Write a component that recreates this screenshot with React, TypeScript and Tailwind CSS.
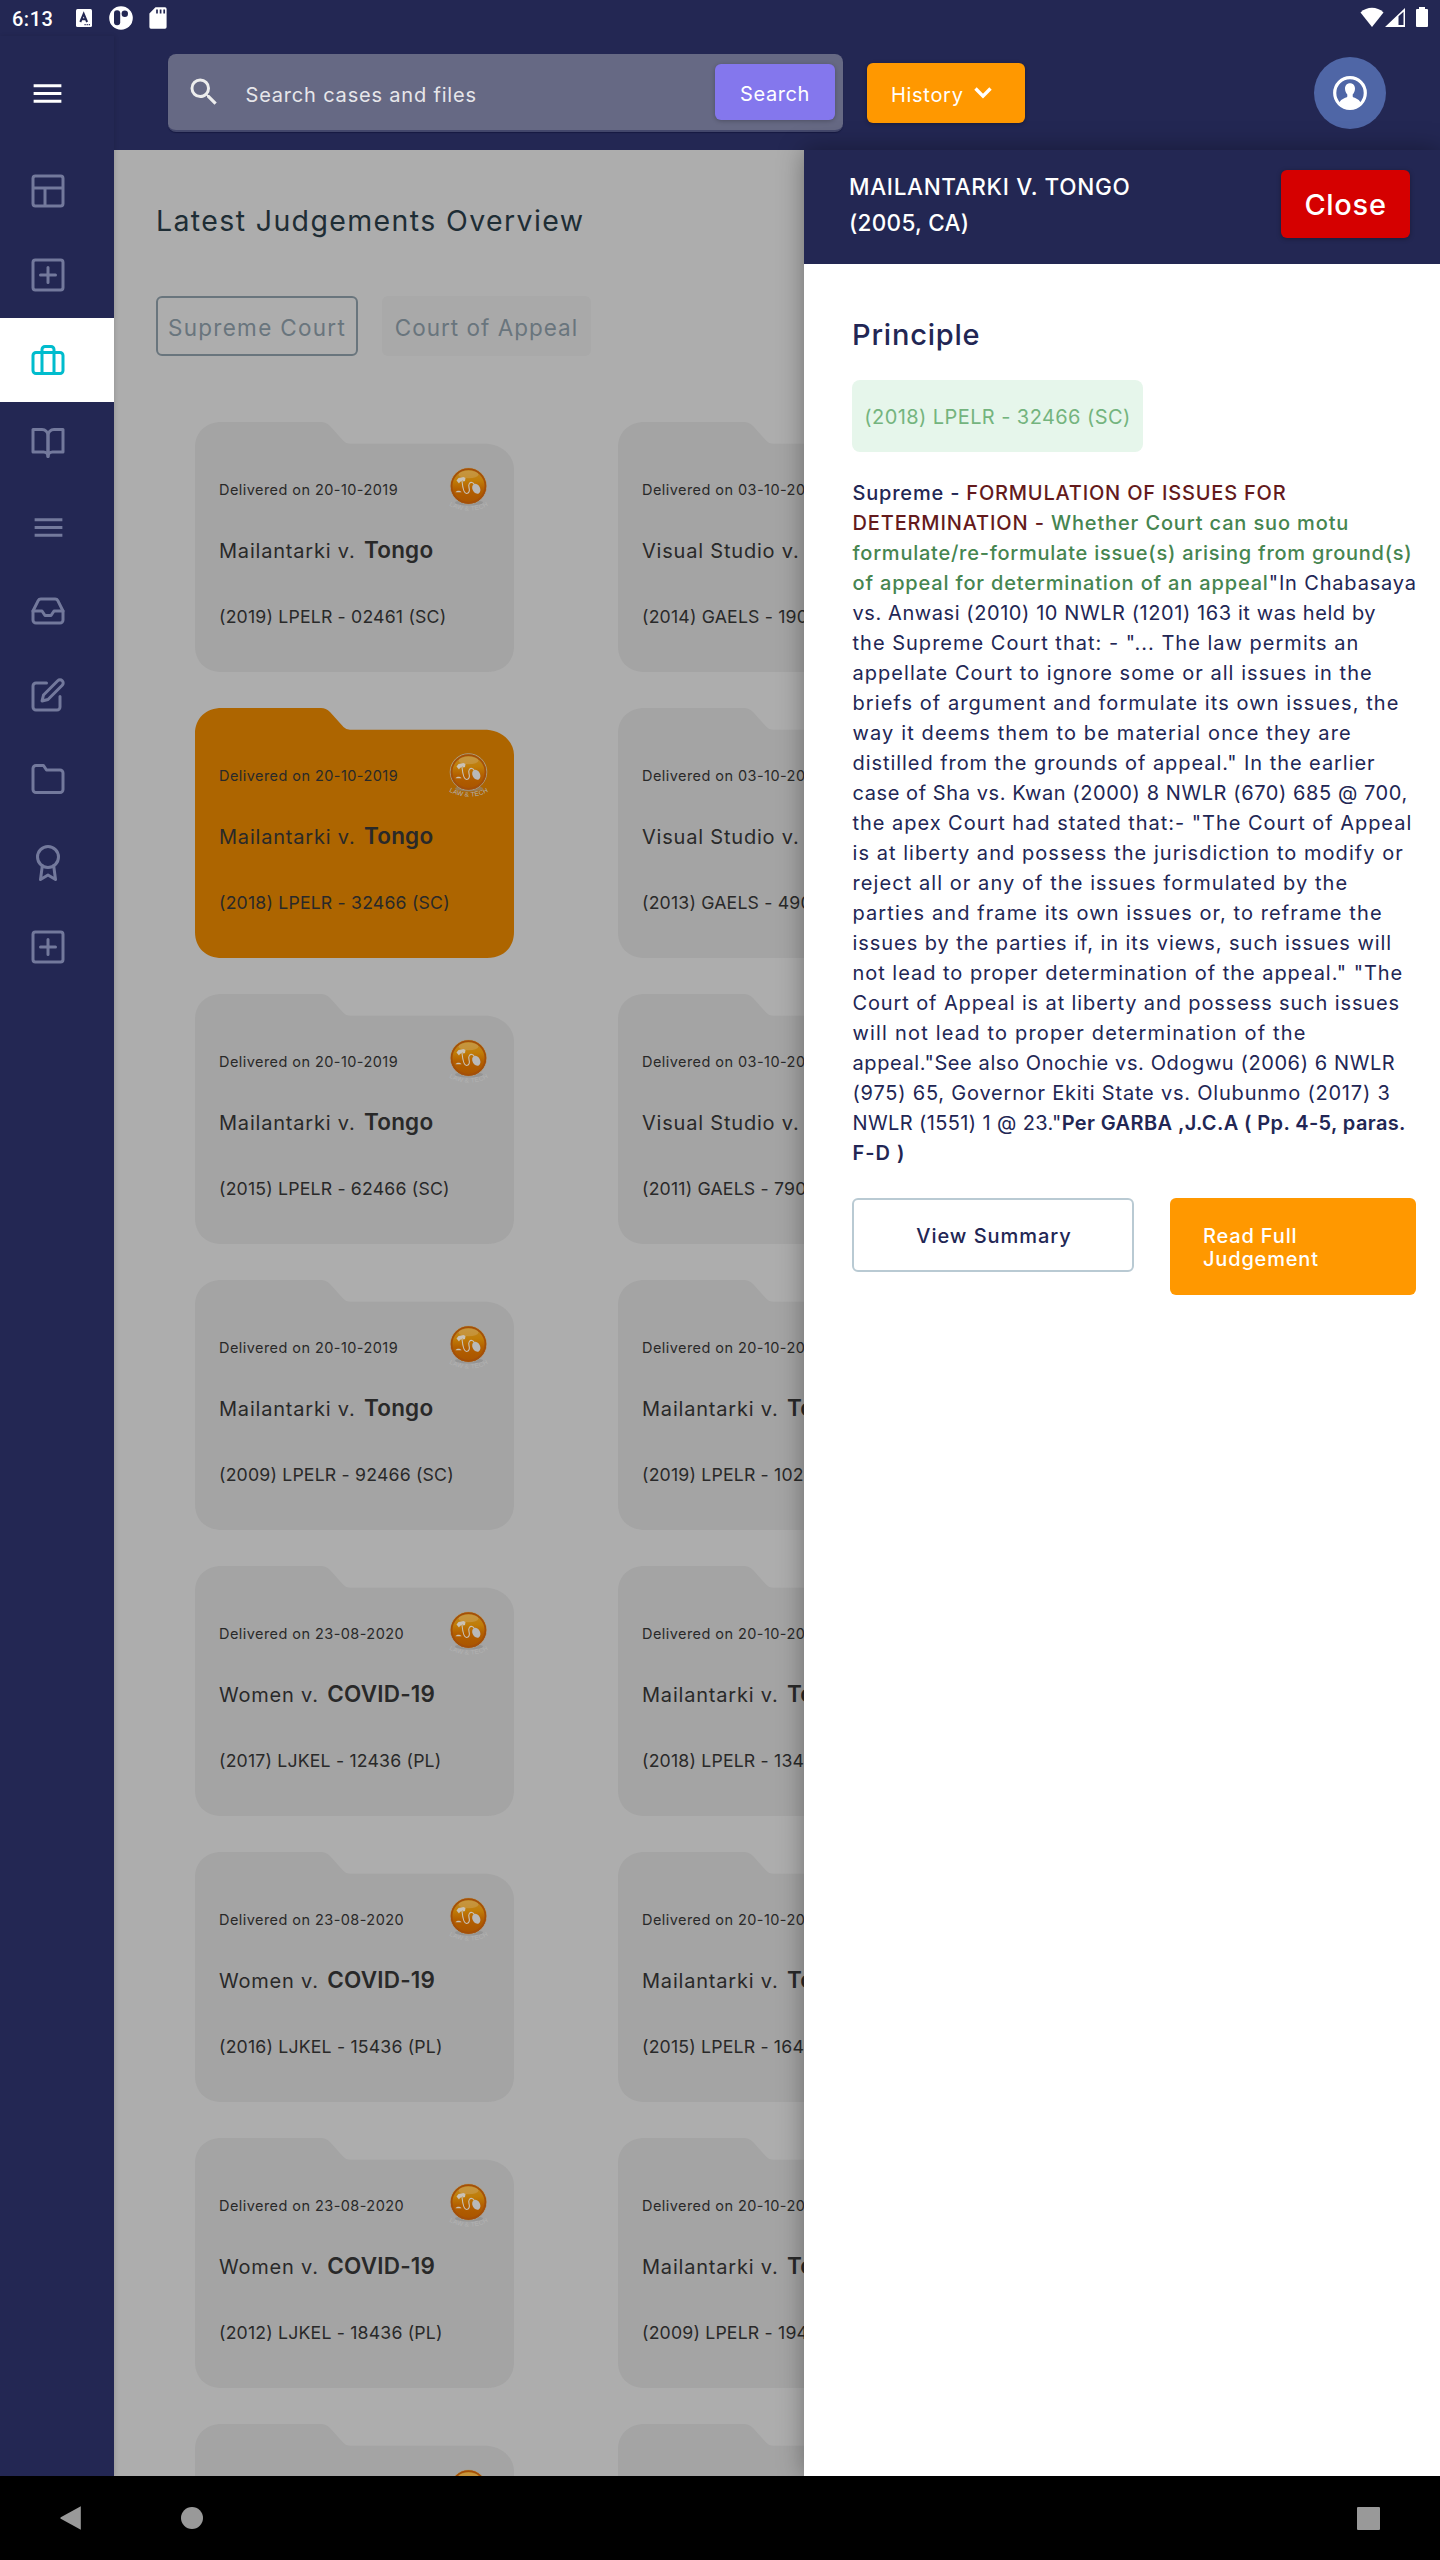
import type { ReactNode } from 'react';
import { FiAward, FiBookOpen, FiBriefcase, FiEdit, FiFolder, FiInbox } from 'react-icons/fi';
import { MdMenu, MdSearch } from 'react-icons/md';

type Case = { date: string; party: string; rival: string; cite: string; active?: boolean };

const cases: Case[] = [
  { date: '20-10-2019', party: 'Mailantarki v.', rival: 'Tongo', cite: '(2019) LPELR - 02461 (SC)' },
  { date: '03-10-2019', party: 'Visual Studio v.', rival: 'Code', cite: '(2014) GAELS - 19061 (SC)' },
  { date: '20-10-2019', party: 'Mailantarki v.', rival: 'Tongo', cite: '(2018) LPELR - 32466 (SC)', active: true },
  { date: '03-10-2019', party: 'Visual Studio v.', rival: 'Code', cite: '(2013) GAELS - 49061 (SC)' },
  { date: '20-10-2019', party: 'Mailantarki v.', rival: 'Tongo', cite: '(2015) LPELR - 62466 (SC)' },
  { date: '03-10-2019', party: 'Visual Studio v.', rival: 'Code', cite: '(2011) GAELS - 79061 (SC)' },
  { date: '20-10-2019', party: 'Mailantarki v.', rival: 'Tongo', cite: '(2009) LPELR - 92466 (SC)' },
  { date: '20-10-2019', party: 'Mailantarki v.', rival: 'Tongo', cite: '(2019) LPELR - 10246 (SC)' },
  { date: '23-08-2020', party: 'Women v.', rival: 'COVID-19', cite: '(2017) LJKEL - 12436 (PL)' },
  { date: '20-10-2019', party: 'Mailantarki v.', rival: 'Tongo', cite: '(2018) LPELR - 13466 (SC)' },
  { date: '23-08-2020', party: 'Women v.', rival: 'COVID-19', cite: '(2016) LJKEL - 15436 (PL)' },
  { date: '20-10-2019', party: 'Mailantarki v.', rival: 'Tongo', cite: '(2015) LPELR - 16466 (SC)' },
  { date: '23-08-2020', party: 'Women v.', rival: 'COVID-19', cite: '(2012) LJKEL - 18436 (PL)' },
  { date: '20-10-2019', party: 'Mailantarki v.', rival: 'Tongo', cite: '(2009) LPELR - 19466 (SC)' },
  { date: '23-08-2020', party: 'Women v.', rival: 'COVID-19', cite: '(2010) LJKEL - 21436 (PL)' },
  { date: '20-10-2019', party: 'Mailantarki v.', rival: 'Tongo', cite: '(2008) LPELR - 22466 (SC)' },
];

function StatusBar() {
  return (
    <div className="flex h-9 shrink-0 items-start justify-between bg-[#232753] text-white">
      <div className="flex items-start">
        <span className="ml-3 w-[64px] pt-[7px] font-['Roboto'] text-[20px] leading-6 font-medium tracking-[0.5px]">6:13</span>
        <svg className="mt-[9px]" width="16" height="18" viewBox="0 0 16 18">
          <rect width="16" height="18" rx="1.5" fill="#fff" />
          <path d="M4.3 13 7.7 4.8 11.1 13M5.4 10.3h4.6" fill="none" stroke="#232753" strokeWidth="2" />
          <path d="M8.5 15.7h5.5" stroke="#232753" strokeWidth="1.2" strokeDasharray="1.2 .9" />
        </svg>
        <svg className="mt-[6px] ml-[17px]" width="24" height="24" viewBox="0 0 24 24">
          <circle cx="12" cy="12" r="11.8" fill="#fff" />
          <rect x="5" y="4.3" width="6.2" height="15" rx="3" fill="#232753" />
          <circle cx="15.8" cy="7.8" r="3.2" fill="#232753" />
        </svg>
        <svg className="mt-[7px] ml-4" width="18" height="22" viewBox="0 0 18 22">
          <path d="M6.5.3H16A1.7 1.7 0 0 1 17.6 2v18a1.7 1.7 0 0 1-1.6 1.7H2A1.7 1.7 0 0 1 .4 20V6.500Z" fill="#fff" />
          <path d="M8 2.500v4M11.600 2.500v4M15.200 2.500v4" stroke="#232753" strokeWidth="1.700" />
        </svg>
      </div>
      <div className="mt-[7px] mr-3 flex">
        <svg width="24" height="20" viewBox="0 0 24 20">
          <path d="M.5 5.500C7-.7 17-.7 23.500 5.500L12 20Z" fill="#fff" />
        </svg>
        <svg className="ml-[1px]" width="20" height="20" viewBox="0 0 20 20">
          <path fillRule="evenodd" d="M0 20 20 1v19ZM13.500 9.200V18h5V4.800Z" fill="#fff" />
        </svg>
        <svg className="ml-[11px]" width="12" height="20" viewBox="0 0 12 20">
          <path d="M3 0h6v2h2a1 1 0 0 1 1 1v16a1 1 0 0 1-1 1H1a1 1 0 0 1-1-1V3a1 1 0 0 1 1-1h2Z" fill="#fff" />
        </svg>
      </div>
    </div>
  );
}

function PlusSquare() {
  return (
    <svg width="36" height="36" viewBox="0 0 24 24" fill="none" stroke="currentColor" strokeWidth="2" strokeLinecap="round">
      <rect x="2" y="2" width="20" height="20" rx="1.600" />
      <path d="M12 7v10M7 12h10" />
    </svg>
  );
}

function LayoutIcon() {
  return (
    <svg width="36" height="36" viewBox="0 0 24 24" fill="none" stroke="currentColor" strokeWidth="2">
      <rect x="2" y="2" width="20" height="20" rx="1.600" />
      <path d="M2 10h20M10 10v12" />
    </svg>
  );
}

function SideItem({ children, active }: { children: ReactNode; active?: boolean }) {
  return (
    <div className={active ? 'flex h-[84px] items-center bg-white pb-[1px] pl-[29.500px] text-[#00bccd]' : 'flex h-[84px] items-center pb-[2px] pl-[29.500px] text-[#73799c]'}>
      {children}
    </div>
  );
}

function Sidebar() {
  return (
    <aside className="z-10 w-[114px] shrink-0 bg-[#232753] shadow-[1px_0_4px_rgba(0,0,0,0.12)]">
      <div className="flex h-[114px] items-center pl-[29px] text-white">
        <MdMenu size={37} />
      </div>
      <SideItem><LayoutIcon /></SideItem>
      <SideItem><PlusSquare /></SideItem>
      <SideItem active><FiBriefcase size={36} /></SideItem>
      <SideItem><FiBookOpen size={36} /></SideItem>
      <SideItem><MdMenu size={37} /></SideItem>
      <SideItem><FiInbox size={36} /></SideItem>
      <SideItem><FiEdit size={36} /></SideItem>
      <SideItem><FiFolder size={36} /></SideItem>
      <SideItem><FiAward size={36} /></SideItem>
      <SideItem><PlusSquare /></SideItem>
    </aside>
  );
}

function Header() {
  return (
    <header className="flex h-[114px] shrink-0 bg-[#232753] pl-[54px] text-[20px] text-white">
      <div className="mt-[18px] flex h-[78px] w-[675px] items-center rounded-[8px] border-b-2 border-[#43476b] bg-[#666984] shadow-[0_1px_1px_rgba(10,12,50,0.5)]">
        <MdSearch size={36} className="ml-[18px] text-[#ededed]" />
        <span className="ml-[23.500px] flex-1 pt-[5px] tracking-[0.810px] text-[#e6e6ea]">Search cases and files</span>
        <button className="mr-2 flex h-14 w-[120px] items-center justify-center rounded-[6px] bg-[#8477ed] pt-[4px] tracking-[0.600px] shadow-[0_1px_4px_rgba(0,0,0,0.25)]">
          Search
        </button>
      </div>
      <button className="mt-[27px] ml-6 flex h-[60px] w-[158px] items-center rounded-[6px] bg-[#ff9800] pl-6 tracking-[0.700px] shadow-[0_1px_4px_rgba(0,0,0,0.3)]">
        <span className="pt-[4px]">History</span>
        <svg className="ml-[10px]" width="18" height="12" viewBox="0 0 18 12">
          <path d="m1.500 1.500 7.500 7.600 7.500-7.600" fill="none" stroke="#fff" strokeWidth="3.400" />
        </svg>
      </button>
      <div className="mt-[21px] mr-[54px] ml-auto flex size-[72px] items-center justify-center rounded-full bg-[#4f66a6]">
        <svg width="34" height="34" viewBox="0 0 34 34">
          <circle cx="17" cy="17" r="15.300" fill="none" stroke="#fff" strokeWidth="3.200" />
          <path d="M17 7.200c3 0 5 2.200 5 5.300 0 2.400-.9 4.600-2.300 5.900v2.100c0 1.300 6.600 1.800 7.800 6.200C25 30 21 32 17 32s-8-2-10.500-5.300c1.200-4.400 7.800-4.900 7.800-6.200v-2.100c-1.400-1.300-2.300-3.500-2.300-5.900 0-3.100 2-5.300 5-5.300Z" fill="#fff" />
        </svg>
      </div>
    </header>
  );
}

function LawTechBadge({ id }: { id: string }) {
  return (
    <svg className="absolute top-[44px] left-[252px]" width="44" height="48" viewBox="0 0 44 48">
      <defs>
        <linearGradient id={id} x1="0" y1="0" x2="0" y2="1">
          <stop offset="0" stopColor="#bf8a28" />
          <stop offset=".35" stopColor="#c07d08" />
          <stop offset=".6" stopColor="#b35f00" />
          <stop offset="1" stopColor="#a85400" />
        </linearGradient>
        <path id={id + 'arc'} d="M2 39.500Q22 50 42 39.500" />
      </defs>
      <ellipse cx="22" cy="36.500" rx="14" ry="3" fill="#8b8b8b" opacity=".6" />
      <circle cx="21.500" cy="20" r="18.300" fill={`url(#${id})`} stroke="#a5a39e" strokeWidth=".8" />
      <circle cx="21.500" cy="20" r="16.900" fill="none" stroke="#a34f0a" strokeWidth="1.700" />
      <ellipse cx="21.500" cy="8.500" rx="10" ry="3.800" fill="#d0ac70" opacity=".4" />
      <path d="m9.500 14.500 2-2.500 5-1 2 1-.5 3-1.500.5-1-1-2.500 1.500-1 1.500Z" fill="#c9c2b6" />
      <path d="M15 15c.5 5 2 12.500 4.500 12.500s3.500-2.500 2.500-6 1-5.500 3-5 2 2 3 3" fill="none" stroke="#c9c2b6" strokeWidth="1.100" />
      <ellipse cx="29.300" cy="22.800" rx="3.800" ry="5.200" transform="rotate(-28 29.300 22.800)" fill="#b9b9b9" />
      <path d="M8.500 26.200c1-2 5-2 6 0Z" fill="#c9c2b6" />
      <text fontFamily="Liberation Sans" fontSize="6.500" fill="#b2b2b2" textLength="41">
        <textPath href={`#${id}arc`}>LAW &amp; TECH</textPath>
      </text>
    </svg>
  );
}

function FolderCard({ data, id }: { data: Case; id: string }) {
  return (
    <article className="relative h-[250px] w-[319px] pt-[54px] pl-6 whitespace-nowrap text-[#292929]">
      <svg className="absolute inset-0" width="319" height="250" viewBox="0 0 319 250">
        <path
          d="M0 26C0 10 11 0 27 0H126Q131 0 135 4L148.500 19Q151 21.700 155 21.700H292C306 22.500 319 33 319 47V224C319 240 308 250 292 250H27C11 250 0 240 0 224Z"
          fill={data.active ? '#ad6500' : '#a4a4a4'}
        />
      </svg>
      <LawTechBadge id={id} />
      <p className="relative h-7 text-[14.500px] leading-7 tracking-[0.440px]">Delivered on {data.date}</p>
      <p className="relative mt-[30px] h-8 text-[20px] leading-8 tracking-[0.800px]">
        {data.party} <b className="ml-[2px] text-[22.500px] font-semibold tracking-[0.200px]">{data.rival}</b>
      </p>
      <p className="relative mt-[37px] h-7 text-[17.700px] leading-7 tracking-[0.180px]">{data.cite}</p>
    </article>
  );
}

function Overview() {
  return (
    <main className="w-[690px] shrink-0 overflow-hidden bg-[#adadad]">
      <h1 className="mt-[51px] ml-[42px] h-10 text-[28.500px] leading-10 font-normal tracking-[1.370px] whitespace-nowrap text-[#1e2d35]">
        Latest Judgements Overview
      </h1>
      <div className="mt-[55px] ml-[42px] flex gap-6 text-[22.500px] text-[#69757d]">
        <div className="flex h-[60px] w-[202px] items-center justify-center rounded-[6px] border-2 border-[#69757d] pt-[3px] tracking-[1.300px] whitespace-nowrap">
          Supreme Court
        </div>
        <div className="flex h-[60px] w-[209px] items-center justify-center rounded-[6px] bg-[#a9a9a9] pt-[3px] tracking-[1px] whitespace-nowrap">
          Court of Appeal
        </div>
      </div>
      <div className="mt-[66px] ml-[81px] grid w-[742px] grid-cols-2 gap-x-[104px] gap-y-9">
        {cases.map((c, i) => (
          <FolderCard key={i} data={c} id={`seal${i}`} />
        ))}
      </div>
    </main>
  );
}

function Principle() {
  return (
    <div className="mt-[26px] ml-[0.500px] text-[20px] leading-[30px] whitespace-nowrap">
      <p className="font-medium tracking-[0.800px]">
        Supreme - <span className="text-[#641a1c]">FORMULATION OF ISSUES FOR</span>
      </p>
      <p className="font-medium tracking-[0.860px] text-[#468550]">
        <span className="text-[#641a1c]">DETERMINATION - </span>Whether Court can suo motu
      </p>
      <p className="font-medium tracking-[0.750px] text-[#468550]">formulate/re-formulate issue(s) arising from ground(s)</p>
      <p className="tracking-[0.830px]">
        <span className="font-medium text-[#468550]">of appeal for determination of an appeal</span>"In Chabasaya
      </p>
      <p className="tracking-[0.580px]">vs. Anwasi (2010) 10 NWLR (1201) 163 it was held by</p>
      <p className="tracking-[1.010px]">the Supreme Court that: - "... The law permits an</p>
      <p className="tracking-[1.050px]">appellate Court to ignore some or all issues in the</p>
      <p className="tracking-[1.070px]">briefs of argument and formulate its own issues, the</p>
      <p className="tracking-[1.130px]">way it deems them to be material once they are</p>
      <p className="tracking-[0.940px]">distilled from the grounds of appeal." In the earlier</p>
      <p className="tracking-[0.580px]">case of Sha vs. Kwan (2000) 8 NWLR (670) 685 @ 700,</p>
      <p className="tracking-[0.970px]">the apex Court had stated that:- "The Court of Appeal</p>
      <p className="tracking-[1.050px]">is at liberty and possess the jurisdiction to modify or</p>
      <p className="tracking-[1.070px]">reject all or any of the issues formulated by the</p>
      <p className="tracking-[1.090px]">parties and frame its own issues or, to reframe the</p>
      <p className="tracking-[0.950px]">issues by the parties if, in its views, such issues will</p>
      <p className="tracking-[0.970px]">not lead to proper determination of the appeal." "The</p>
      <p className="tracking-[0.880px]">Court of Appeal is at liberty and possess such issues</p>
      <p className="tracking-[1.190px]">will not lead to proper determination of the</p>
      <p className="tracking-[0.600px]">appeal."See also Onochie vs. Odogwu (2006) 6 NWLR</p>
      <p className="tracking-[0.790px]">(975) 65, Governor Ekiti State vs. Olubunmo (2017) 3</p>
      <p className="tracking-[0.380px]">
        NWLR (1551) 1 @ 23."<b className="font-semibold">Per GARBA ,J.C.A ( Pp. 4-5, paras.</b>
      </p>
      <p className="font-semibold tracking-[1px]">F-D )</p>
    </div>
  );
}

function Drawer() {
  return (
    <section className="z-10 w-[636px] shrink-0 bg-white text-[#222654] shadow-[0_0_24px_rgba(0,0,0,0.35)]">
      <div className="flex h-[114px] items-start justify-between bg-[#232753] pt-[19px] pr-[30px] pl-[45px] text-white">
        <h2 className="text-[22.500px] leading-9 font-medium whitespace-nowrap">
          <span className="block tracking-[0.670px]">MAILANTARKI V. TONGO</span>
          <span className="block tracking-[0.300px]">(2005, CA)</span>
        </h2>
        <button className="mt-[1px] flex h-[68px] w-[129px] items-center justify-center rounded-[6px] bg-[#d50000] pt-[1px] text-[29px] font-medium tracking-[0.700px] shadow-[0_1px_5px_rgba(0,0,0,0.3)]">
          Close
        </button>
      </div>
      <div className="pl-12">
        <h3 className="mt-[51px] h-10 text-[29px] leading-10 font-medium tracking-[0.800px]">Principle</h3>
        <div className="mt-[25px] flex h-[72px] w-[291px] items-center justify-center rounded-[8px] bg-[#e6f6eb] pt-[2px] text-[20px] tracking-[0.420px] whitespace-nowrap text-[#74b47e]">
          (2018) LPELR - 32466 (SC)
        </div>
        <Principle />
        <div className="mt-[30px] flex items-start gap-9 text-[20px] leading-[22.500px] font-medium">
          <button className="flex h-[74px] w-[282px] items-center justify-center rounded-[6px] border-2 border-[#b9cad3] pt-[3px] pl-[2px] tracking-[0.950px]">
            View Summary
          </button>
          <button className="flex h-[97px] w-[246px] items-center rounded-[6px] bg-[#ff9800] pt-[2px] pr-20 pl-[33px] text-left tracking-[0.830px] text-white">
            Read Full Judgement
          </button>
        </div>
      </div>
    </section>
  );
}

function NavBar() {
  return (
    <nav className="flex h-[84px] shrink-0 items-center bg-black px-[60px]">
      <svg width="22" height="26" viewBox="0 0 22 26">
        <path d="M20.800 1.200v23.600L.8 13.800q-1-.8 0-1.600Z" fill="#999" />
      </svg>
      <div className="ml-[99px] size-[22px] rounded-full bg-[#999]" />
      <div className="ml-auto size-[23px] rounded-[1px] bg-[#999]" />
    </nav>
  );
}

export default function App() {
  return (
    <div className="flex h-[2560px] w-[1440px] flex-col overflow-hidden font-['Inter',sans-serif]">
      <StatusBar />
      <div className="flex min-h-0 flex-1">
        <Sidebar />
        <div className="flex min-w-0 flex-1 flex-col overflow-hidden">
          <Header />
          <div className="flex min-h-0 flex-1">
            <Overview />
            <Drawer />
          </div>
        </div>
      </div>
      <NavBar />
    </div>
  );
}
